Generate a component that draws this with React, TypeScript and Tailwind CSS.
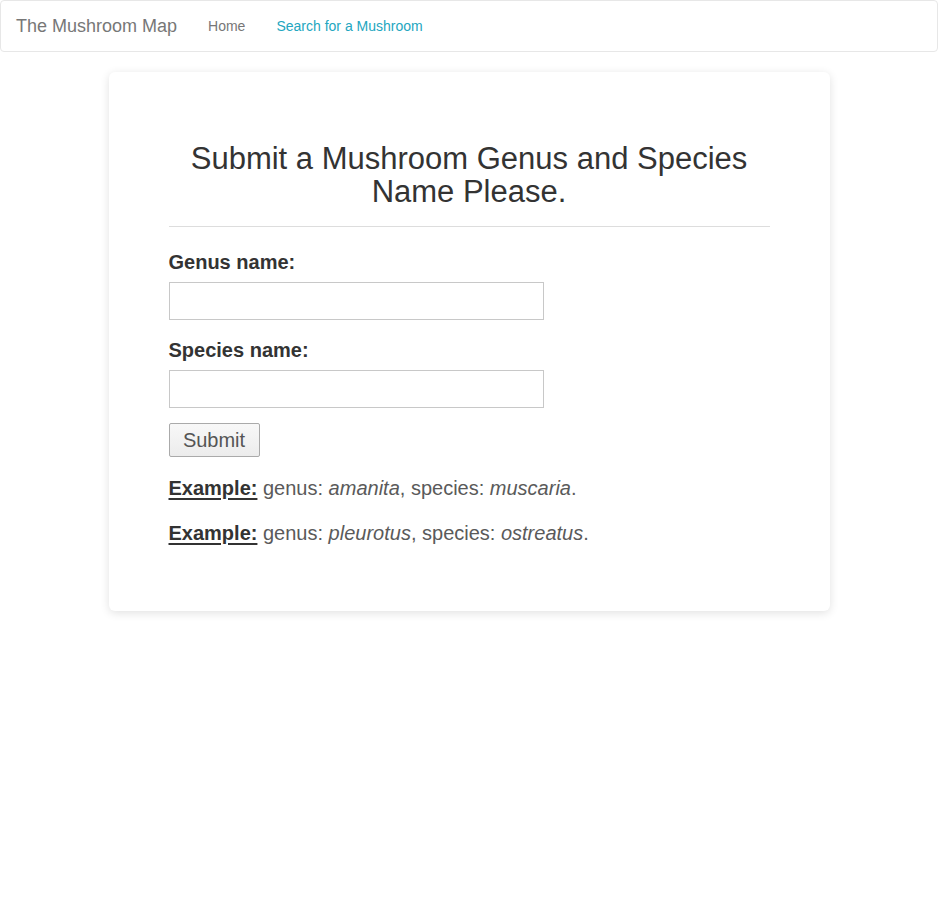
import React from "react";

const Example = ({ genus, species }: { genus: string; species: string }) => (
  <p className="text-[20px] leading-[28px] text-[#5a5a5a] mb-[17px]">
    <span className="font-bold text-[#333] underline underline-offset-[3px]">Example:</span>{" "}
    genus: <em>{genus}</em>, species: <em>{species}</em>.
  </p>
);

const App = () => {
  return (
    <div className="min-h-[900px] bg-white text-[#333]" style={{ fontFamily: '"Liberation Sans", Arial, sans-serif' }}>
      {/* Navbar */}
      <nav className="h-[52px] border border-[#e7e7e7] rounded-[4px] flex items-center px-[15px] bg-white">
        <span className="text-[18px] text-[#777] mr-[30px] mt-[1px]">The Mushroom Map</span>
        <a className="text-[14px] text-[#777] mr-[30px] ml-[1px] mt-[1px]">Home</a>
        <a className="text-[14px] text-[#23a6c0] ml-[1px] mt-[1px]">Search for a Mushroom</a>
      </nav>

      {/* Card */}
      <div className="mx-auto mt-[20px] w-[721px] bg-white rounded-[6px] shadow-[0_2px_10px_rgba(0,0,0,0.12)] px-[60px] pt-[70px] pb-[47px]">
        <h1 className="text-[31px] leading-[33px] text-center text-[#333] font-normal">
          Submit a Mushroom Genus and Species Name Please.
        </h1>
        <hr className="mt-[18px] mb-[21px] border-t border-[#ddd]" />

        <form onSubmit={(e) => e.preventDefault()}>
          <label className="block text-[20px] leading-[28px] font-bold mb-[6px]">Genus name:</label>
          <input type="text" className="block w-[375px] h-[38px] border border-[#c8c8c8] mb-[16px]" />
          <label className="block text-[20px] leading-[28px] font-bold mb-[6px]">Species name:</label>
          <input type="text" className="block w-[375px] h-[38px] border border-[#c8c8c8] mb-[15px]" />
          <button
            type="submit"
            className="w-[91px] h-[34px] border border-[#aaa] bg-gradient-to-b from-[#f8f8f8] to-[#ececec] text-[20px] text-[#555] rounded-[2px] mb-[17px]"
          >
            Submit
          </button>
        </form>

        <Example genus="amanita" species="muscaria" />
        <Example genus="pleurotus" species="ostreatus" />
      </div>
    </div>
  );
};

export default App;
